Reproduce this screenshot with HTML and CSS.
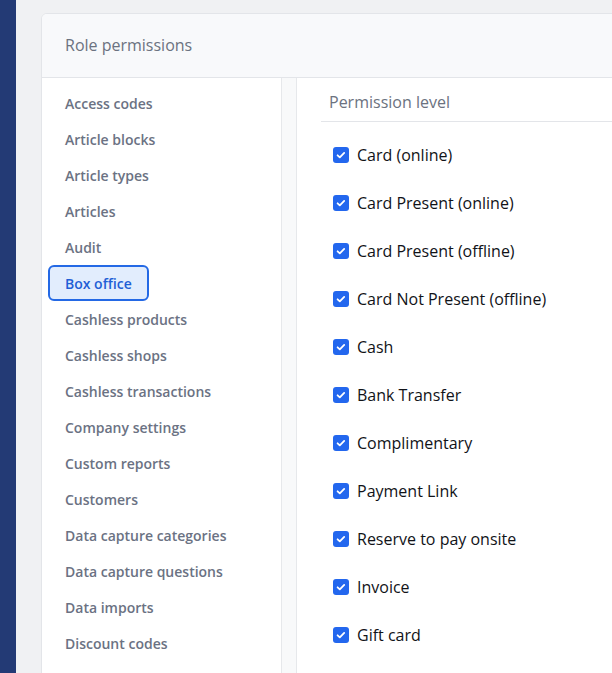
FILE: index.html
```html
<!DOCTYPE html>
<html>
<head>
<meta charset="utf-8">
<link rel="stylesheet" href="styles.css">
</head>
<body>
<div class="app">
  <div class="nav"></div>
  <main class="main">
    <section class="card">
      <header class="card-head">Role permissions</header>
      <div class="card-body">
        <ul class="resources">
          <li class="res">Access codes</li>
          <li class="res">Article blocks</li>
          <li class="res">Article types</li>
          <li class="res">Articles</li>
          <li class="res">Audit</li>
          <li class="res active">Box office</li>
          <li class="res">Cashless products</li>
          <li class="res">Cashless shops</li>
          <li class="res">Cashless transactions</li>
          <li class="res">Company settings</li>
          <li class="res">Custom reports</li>
          <li class="res">Customers</li>
          <li class="res">Data capture categories</li>
          <li class="res">Data capture questions</li>
          <li class="res">Data imports</li>
          <li class="res">Discount codes</li>
        </ul>
        <div class="divider"></div>
        <div class="perms">
          <div class="perms-head">Permission level</div>
          <ul class="perm-list">
            <li class="perm"><span class="cb"><svg viewBox="0 0 16 16"><path d="M4.6 8.3l2.2 2.1 4.4-4.5" /></svg></span>Card (online)</li>
            <li class="perm"><span class="cb"><svg viewBox="0 0 16 16"><path d="M4.6 8.3l2.2 2.1 4.4-4.5" /></svg></span>Card Present (online)</li>
            <li class="perm"><span class="cb"><svg viewBox="0 0 16 16"><path d="M4.6 8.3l2.2 2.1 4.4-4.5" /></svg></span>Card Present (offline)</li>
            <li class="perm"><span class="cb"><svg viewBox="0 0 16 16"><path d="M4.6 8.3l2.2 2.1 4.4-4.5" /></svg></span>Card Not Present (offline)</li>
            <li class="perm"><span class="cb"><svg viewBox="0 0 16 16"><path d="M4.6 8.3l2.2 2.1 4.4-4.5" /></svg></span>Cash</li>
            <li class="perm"><span class="cb"><svg viewBox="0 0 16 16"><path d="M4.6 8.3l2.2 2.1 4.4-4.5" /></svg></span>Bank Transfer</li>
            <li class="perm"><span class="cb"><svg viewBox="0 0 16 16"><path d="M4.6 8.3l2.2 2.1 4.4-4.5" /></svg></span>Complimentary</li>
            <li class="perm"><span class="cb"><svg viewBox="0 0 16 16"><path d="M4.6 8.3l2.2 2.1 4.4-4.5" /></svg></span>Payment Link</li>
            <li class="perm"><span class="cb"><svg viewBox="0 0 16 16"><path d="M4.6 8.3l2.2 2.1 4.4-4.5" /></svg></span>Reserve to pay onsite</li>
            <li class="perm"><span class="cb"><svg viewBox="0 0 16 16"><path d="M4.6 8.3l2.2 2.1 4.4-4.5" /></svg></span>Invoice</li>
            <li class="perm"><span class="cb"><svg viewBox="0 0 16 16"><path d="M4.6 8.3l2.2 2.1 4.4-4.5" /></svg></span>Gift card</li>
          </ul>
        </div>
      </div>
    </section>
  </main>
</div>
</body>
</html>
```
FILE: styles.css
```css
html, body {
  margin: 0;
  padding: 0;
  height: 100%;
  overflow: hidden;
  background: #f0f1f3;
  font-family: "Open Sans", "Noto Sans", sans-serif;
}
.app {
  display: flex;
  height: 673px;
  overflow: hidden;
}
.nav {
  flex: 0 0 16px;
  background: #233a75;
}
.main {
  flex: 1;
  padding: 13px 0 0 25px;
  min-width: 0;
  overflow: hidden;
}
.card {
  width: 640px;
  height: 760px;
  background: #fff;
  border: 1px solid #e3e5e9;
  border-radius: 6px;
  overflow: hidden;
  box-sizing: border-box;
}
.card-head {
  height: 64px;
  box-sizing: border-box;
  border-bottom: 1px solid #e3e5e9;
  background: #f8f9fb;
  padding-left: 23px;
  display: flex;
  align-items: center;
  padding-bottom: 1px;
  font-size: 16px;
  color: #6b7280;
}
.card-body {
  display: flex;
  height: 100%;
}
.resources {
  list-style: none;
  margin: 0;
  padding: 7px 0 0 0;
  width: 239px;
  display: flex;
  flex-direction: column;
  align-items: flex-start;
}
.res {
  height: 36px;
  flex: 0 0 auto;
  box-sizing: border-box;
  display: flex;
  align-items: center;
  margin-left: 6px;
  padding: 0 15px;
  border: 2px solid transparent;
  border-radius: 6px;
  font-size: 14px;
  font-weight: 600;
  color: #6b7283;
}
.res.active {
  background: #e2edfd;
  border-color: #2469e5;
  color: #1f5fd6;
}
.divider {
  width: 14px;
  background: #f8f9fa;
  border-left: 1px solid #e6e8eb;
  border-right: 1px solid #e6e8eb;
}
.perms {
  flex: 1;
  padding-left: 24px;
}
.perms-head {
  height: 44px;
  box-sizing: border-box;
  border-bottom: 1px solid #e3e5e9;
  padding: 4px 0 0 8px;
  display: flex;
  align-items: center;
  font-size: 16px;
  color: #6b7280;
}
.perm-list {
  list-style: none;
  margin: 0;
  padding: 9px 0 0 12px;
}
.perm {
  height: 48px;
  display: flex;
  align-items: center;
  gap: 8px;
  font-size: 16px;
  color: #111318;
}
.cb {
  width: 16px;
  height: 16px;
  border-radius: 3px;
  background: #2367ee;
  display: flex;
  flex: 0 0 16px;
}
.cb svg {
  width: 16px;
  height: 16px;
  fill: none;
  stroke: #fff;
  stroke-width: 1.8;
  stroke-linecap: round;
  stroke-linejoin: round;
}
```
